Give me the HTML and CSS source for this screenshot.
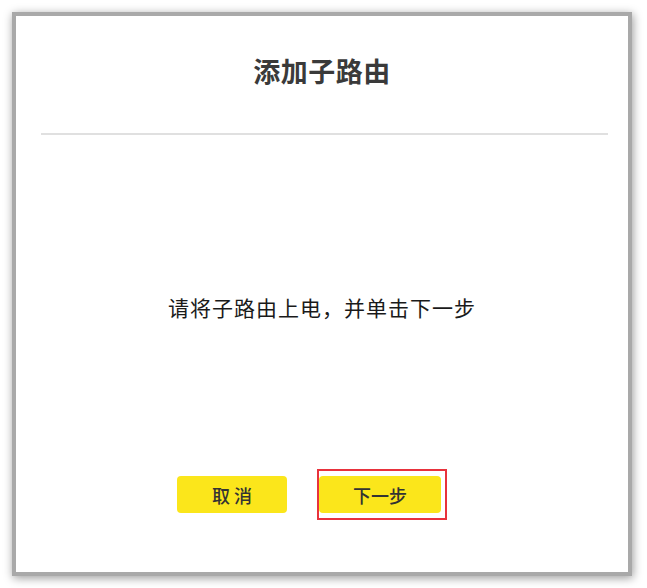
FILE: index.html
```html
<!DOCTYPE html>
<html lang="zh-CN">
<head>
<meta charset="utf-8">
<link rel="stylesheet" href="styles.css">
</head>
<body>
<div class="frame">
  <h1 class="title">添加子路由</h1>
  <div class="divider"></div>
  <p class="message">请将子路由上电，并单击下一步</p>
  <div class="actions">
    <button class="btn btn-cancel">取 消</button>
    <span class="highlight"><button class="btn btn-next">下一步</button></span>
  </div>
</div>
</body>
</html>
```

FILE: styles.css
```css
html, body {
  margin: 0;
  padding: 0;
  background: #ffffff;
}
body {
  padding: 12px;
  font-family: "Noto Sans CJK SC", "Noto Sans", sans-serif;
}
.frame {
  box-sizing: border-box;
  width: 620px;
  height: 564px;
  border: 4px solid #a9a9a9;
  background: #ffffff;
  box-shadow: 1px 2px 9px rgba(0, 0, 0, 0.4);
  display: flex;
  flex-direction: column;
}
.title {
  margin: 37px 0 0;
  font-size: 27px;
  line-height: 36px;
  font-weight: 700;
  letter-spacing: 0.5px;
  color: #3a3a3a;
  text-align: center;
}
.divider {
  height: 2px;
  background: #e0e0e0;
  margin: 44px 20px 0 25px;
}
.message {
  margin: 157px 0 0;
  font-size: 21px;
  line-height: 30px;
  letter-spacing: 1px;
  color: #1a1a1a;
  text-align: center;
  font-weight: 400;
}
.actions {
  margin-top: 147px;
  display: flex;
  align-items: center;
  padding-left: 161px;
  gap: 30px;
}
.btn {
  box-sizing: border-box;
  height: 37px;
  border: none;
  border-radius: 4px;
  background: #fbe61b;
  color: #333333;
  font-family: "Noto Sans CJK SC", "Noto Sans", sans-serif;
  font-size: 18px;
  font-weight: 500;
  padding: 0;
  cursor: pointer;
}
.btn-cancel {
  width: 110px;
}
.btn-next {
  width: 122px;
  display: block;
}
.highlight {
  display: block;
  border: 2px solid #e8323c;
  padding: 5px 4px 5px 0;
}
```
